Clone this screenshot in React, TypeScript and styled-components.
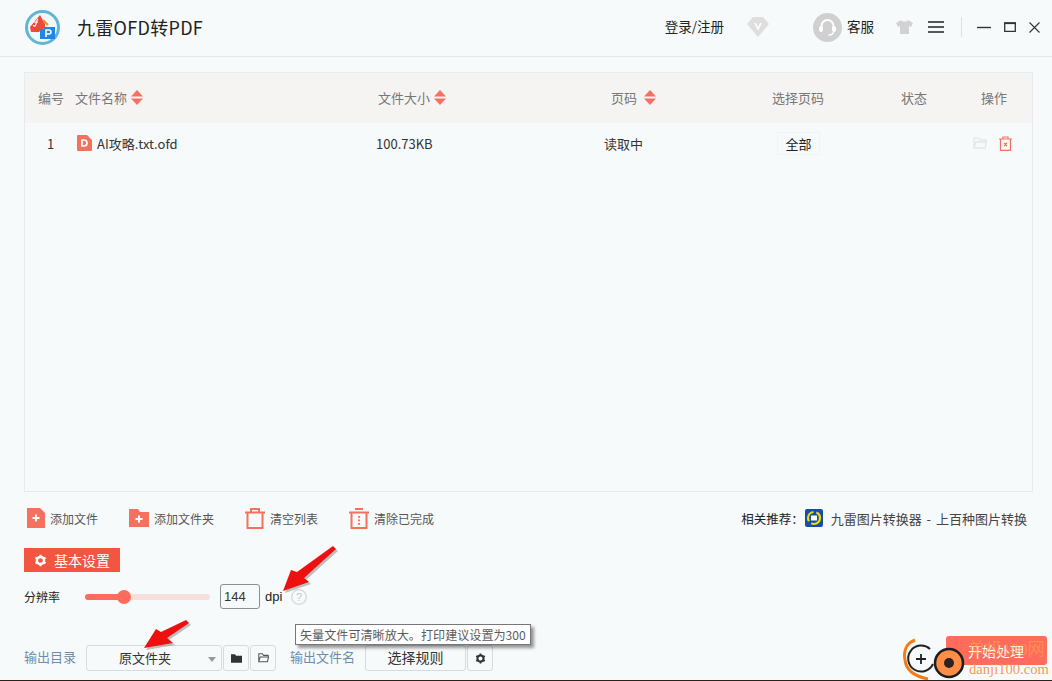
import React from 'react'
import styled, { createGlobalStyle } from 'styled-components'

const coral = '#ff6b5c'
const cjk = `"Noto Sans CJK SC", "Liberation Sans", sans-serif`

const GlobalStyle = createGlobalStyle`
  html, body {
    margin: 0;
    padding: 0;
    background: #f7fafb;
    font-family: ${cjk};
  }
  * { box-sizing: border-box; }
`

const Page = styled.div`
  position: relative;
  width: 1052px;
  height: 681px;
  overflow: hidden;
  display: flex;
  flex-direction: column;
  background: #f7fafb;
  border-bottom: 1px solid #2b2118;
`

const Header = styled.header`
  height: 57px;
  flex: none;
  display: flex;
  align-items: center;
  padding: 0 12px 2px 25px;
  border-bottom: 1px solid #e4e6e8;
`

const AppTitle = styled.h1`
  margin: 0 0 0 17px;
  font-size: 18px;
  font-weight: 400;
  color: #222;
  letter-spacing: 0.3px;
`

const HeaderRight = styled.div`
  margin-left: auto;
  display: flex;
  align-items: center;
`

const HeaderText = styled.span`
  font-size: 13.5px;
  color: #222;
  margin-bottom: 3px;
`

const Avatar = styled.div`
  width: 29px;
  height: 29px;
  border-radius: 50%;
  background: #d0d0d0;
  display: flex;
  align-items: center;
  justify-content: center;
  margin: 0 5px 0 44px;
`

const Divider = styled.div`
  width: 1px;
  height: 20px;
  background: #dfe2e4;
  margin: 0 15px 0 17px;
`

const TableBox = styled.section`
  flex: none;
  margin: 15px 0 0 24px;
  width: 1009px;
  height: 420px;
  border: 1px solid #e8eaeb;
`

const HeadRow = styled.div`
  height: 50px;
  display: grid;
  grid-template-columns: 50px 303px 233px 161px 129px 80px 1fr;
  align-items: center;
  padding-bottom: 2px;
  background: #f5f4f2;
  font-size: 13px;
  color: #777;
`

const HeadCell = styled.div<{ $pad?: number; $gap?: number }>`
  display: flex;
  align-items: center;
  gap: ${p => p.$gap ?? 4}px;
  padding-left: ${p => p.$pad ?? 0}px;
`

const BodyRow = styled.div`
  height: 42px;
  display: grid;
  grid-template-columns: 50px 301px 228px 173px 173px 1fr;
  align-items: center;
  padding-bottom: 2px;
  font-size: 13px;
  color: #333;
`

const IndexCell = styled.div`
  text-align: center;
  padding-left: 1px;
`

const NameCell = styled.div`
  display: flex;
  align-items: center;
  gap: 5px;
  padding-left: 2px;
`

const PageCellBox = styled.div`
  width: 43px;
  height: 23px;
  border: 1px solid #f1f3f4;
  display: flex;
  align-items: center;
  justify-content: center;
  color: #222;
`

const ActionCell = styled.div`
  display: flex;
  align-items: center;
  gap: 12px;
  padding-left: 23px;
`

const ToolRow = styled.div`
  flex: none;
  height: 54px;
  display: flex;
  align-items: center;
  padding: 0 25px 2px 27px;
  font-size: 12px;
  color: #555;
`

const ToolItem = styled.div<{ $width: number }>`
  width: ${p => p.$width}px;
  display: flex;
  align-items: center;
  gap: 5px;
`

const Recommend = styled.div`
  margin-left: auto;
  display: flex;
  align-items: center;
  color: #333;
  font-size: 13px;
`

const RecommendLabel = styled.span`
  color: #222;
  font-size: 12.5px;
  margin-right: 1px;
`

const RecommendLink = styled.span`
  margin-left: 8px;
  color: #444;
  word-spacing: 2px;
`

const SettingsTab = styled.div`
  flex: none;
  margin: 2px 0 0 24px;
  width: 96px;
  height: 24px;
  background: #f25540;
  color: #fff;
  font-size: 14px;
  display: flex;
  align-items: center;
  gap: 7px;
  padding-left: 10px;
`

const DpiRow = styled.div`
  flex: none;
  height: 25px;
  margin: 12px 0 0 24px;
  display: flex;
  align-items: center;
  font-size: 12px;
  color: #222;
`

const Slider = styled.div`
  position: relative;
  width: 125px;
  height: 6px;
  margin: 0 10px 0 25px;
  border-radius: 3px;
  background: #f8dfdc;
`

const SliderFill = styled.div`
  height: 100%;
  border-radius: 3px;
  background: ${coral};
`

const SliderThumb = styled.div`
  position: absolute;
  top: -4px;
  width: 14px;
  height: 14px;
  margin-left: -7px;
  border-radius: 50%;
  background: ${coral};
`

const DpiInput = styled.div`
  width: 40px;
  height: 25px;
  border: 1px solid #8a8f94;
  border-radius: 3px;
  display: flex;
  align-items: center;
  padding-left: 3px;
  font-family: "Liberation Sans", sans-serif;
  font-size: 13px;
  color: #333;
`

const DpiUnit = styled.span`
  margin: 0 9px 0 5px;
  font-family: "Liberation Sans", sans-serif;
  font-size: 13px;
  color: #222;
`

const OutputRow = styled.div`
  flex: none;
  height: 26px;
  margin: 36px 0 0 24px;
  display: flex;
  align-items: center;
  font-size: 13px;
`

const OutputLabel = styled.span<{ $gap: number }>`
  color: #6d8cab;
  margin-right: ${p => p.$gap}px;
  margin-bottom: 4px;
`

const SelectBox = styled.div`
  width: 136px;
  height: 26px;
  border: 1px solid #d8dbdd;
  border-radius: 3px;
  display: flex;
  align-items: center;
  padding-left: 32px;
  padding-bottom: 2px;
  color: #333;
  position: relative;
`

const Caret = styled.span`
  position: absolute;
  right: 5px;
  top: 11px;
  border: 4px solid transparent;
  border-top: 5px solid #999;
  border-bottom: 0;
`

const IconButton = styled.div<{ $right?: number }>`
  width: 26px;
  height: 26px;
  margin-left: 1px;
  margin-right: ${p => p.$right ?? 0}px;
  border: 1px solid #d8dbdd;
  border-radius: 3px;
  display: flex;
  align-items: center;
  justify-content: center;
`

const RuleButton = styled.div`
  width: 101px;
  height: 26px;
  border: 1px solid #d8dbdd;
  border-radius: 3px;
  display: flex;
  align-items: center;
  justify-content: center;
  padding-bottom: 2px;
  font-size: 14px;
  color: #333;
`

const StartButton = styled.div`
  position: absolute;
  left: 946px;
  top: 636px;
  width: 101px;
  height: 29px;
  border-radius: 3px;
  background: ${coral};
  color: #fff;
  font-size: 14px;
  display: flex;
  align-items: center;
  padding-left: 22px;
`

const Tooltip = styled.div`
  position: absolute;
  left: 295px;
  top: 624px;
  width: 236px;
  height: 21px;
  background: #fff;
  border: 1px solid #777;
  box-shadow: 3px 3px 3px rgba(0, 0, 0, 0.4);
  font-size: 12.1px;
  line-height: 19px;
  padding-left: 4px;
  color: #5b5b5b;
  white-space: nowrap;
`

const ArrowLayer = styled.svg<{ $x: number; $y: number }>`
  position: absolute;
  left: ${p => p.$x}px;
  top: ${p => p.$y}px;
`

const WatermarkLogo = styled.svg`
  position: absolute;
  left: 903px;
  top: 637px;
`

const WatermarkName = styled.div`
  position: absolute;
  left: 968px;
  top: 638px;
  font-size: 17px;
  line-height: 24px;
  color: rgba(255, 165, 70, 0.6);
  font-family: "Liberation Serif", "Noto Sans CJK SC", serif;
  white-space: nowrap;
`

const WatermarkUrl = styled.div`
  position: absolute;
  left: 969px;
  top: 661px;
  font-family: "Liberation Serif", serif;
  font-size: 14.6px;
  line-height: 17px;
  color: #f39a55;
  white-space: nowrap;
`

const SortIcon = () => (
  <svg width="12" height="15" viewBox="0 0 12 15">
    <path d="M6 0 12 6.500H0Z" fill="#f5705f" />
    <path d="M0 8.500H12L6 15Z" fill="#f5705f" />
  </svg>
)

const GearIcon: React.FC<{ size: number; color: string }> = ({ size, color }) => (
  <svg width={size} height={size} viewBox="0 0 16 16">
    <circle cx="8" cy="8" r="4.400" fill="none" stroke={color} strokeWidth="3" />
    <g stroke={color} strokeWidth="2.600">
      <path d="M8 .8v3M8 12.200v3M1.800 4.400l2.600 1.500M11.600 10.100l2.600 1.500M1.800 11.600l2.600-1.500M11.600 5.900l2.600-1.500" />
    </g>
  </svg>
)

const AppLogo = () => (
  <svg width="35" height="35" viewBox="0 0 35 35">
    <circle cx="17.500" cy="17.500" r="16" fill="#f2f7f8" stroke="#62b5d4" strokeWidth="3" />
    <path d="M5 17 15 5l5 9v3l-6 5H6Z" fill="#ee4a3c" />
    <path d="M13 9c-2 1-1 5-3 7-.6.6-1.500 0-1.500-1M9 12h4" stroke="#fff" strokeWidth="1.200" fill="none" />
    <path d="M18 10l5 5" stroke="#f08a24" strokeWidth="2" />
    <path d="M15 19h3l1-2h11v12H15Z" fill="#1f86e6" />
    <path d="M21 27v-7h3a2 2 0 0 1 0 4h-3" stroke="#fff" strokeWidth="1.500" fill="none" />
  </svg>
)

const DocIcon = () => (
  <svg width="15" height="16" viewBox="0 0 15 16">
    <path d="M1 0H10L15 5V15a1 1 0 0 1-1 1H1a1 1 0 0 1-1-1V1a1 1 0 0 1 1-1Z" fill="#f5705f" />
    <path d="M5 5h2a3 3 0 0 1 0 6H5Z" fill="none" stroke="#fff" strokeWidth="1.700" />
  </svg>
)

const AddFileIcon = () => (
  <svg width="18" height="20" viewBox="0 0 18 20">
    <path d="M0 0H13L18 5V20H0Z" fill="#f5705f" />
    <path d="M9 6.500v7M5.500 10h7" stroke="#fff" strokeWidth="2" />
  </svg>
)

const AddFolderIcon = () => (
  <svg width="20" height="18" viewBox="0 0 20 18">
    <path d="M0 0H9L11 3H20V18H0Z" fill="#f5705f" />
    <path d="M10 6.500v7M6.500 10h7" stroke="#fff" strokeWidth="2" />
  </svg>
)

const ClearIcon = () => (
  <svg width="20" height="21" viewBox="0 0 20 21" fill="none" stroke="#f5705f" strokeWidth="2">
    <path d="M0 4.500H20M6 4.500V1H14V4.500M2.500 4.500V20H17.500V4.500" />
  </svg>
)

const ClearDoneIcon = () => (
  <svg width="20" height="21" viewBox="0 0 20 21" fill="none" stroke="#f5705f" strokeWidth="2">
    <path d="M0 4.500H20M6 1H14M2.500 4.500V20H17.500V4.500M10 8v1.800M10 11.500v1.800M10 15v1.800" />
  </svg>
)

const FolderOutline: React.FC<{ color: string; width?: number }> = ({ color, width = 14 }) => (
  <svg width={width} height={width * 0.86} viewBox="0 0 14 12" fill="none" stroke={color} strokeWidth="1.300">
    <path d="M1 11V1H5.500L7 3H13V5M1 11H12L13.500 5H2.800L1 11Z" />
  </svg>
)

const TrashIcon = () => (
  <svg width="13" height="15" viewBox="0 0 13 15" fill="none" stroke="#f5705f" strokeWidth="1.200">
    <path d="M0 3H13M4 3V1H9V3M1.500 3V14.400H11.500V3M5 7l3 3M8 7l-3 3" />
  </svg>
)

const RedArrow: React.FC<{ x: number; y: number; w: number; h: number; d: string }> = ({ x, y, w, h, d }) => (
  <ArrowLayer $x={x} $y={y} width={w} height={h} viewBox={`0 0 ${w} ${h}`}>
    <path d={d} fill="#777" opacity="0.45" transform="translate(2 2)" />
    <path d={d} fill="#ee0f0f" />
  </ArrowLayer>
)

export default function App() {
  return (
    <Page>
      <GlobalStyle />
      <Header>
        <AppLogo />
        <AppTitle>九雷OFD转PDF</AppTitle>
        <HeaderRight>
          <HeaderText>登录/注册</HeaderText>
          <svg width="22" height="20" viewBox="0 0 22 20" style={{ marginLeft: 23 }}>
            <path d="M6 0H16L22 7 11 20 0 7Z" fill="#dedede" />
            <path d="M8 6l3 6 3-6" stroke="#fff" strokeWidth="1.600" fill="none" />
          </svg>
          <Avatar>
            <svg width="19" height="19" viewBox="0 0 19 19" fill="none" stroke="#fff" strokeWidth="2">
              <path d="M3.500 10V8a6 6 0 0 1 12 0v2" />
              <rect x="1.500" y="8.500" width="3" height="5" rx="1.500" fill="#fff" strokeWidth="1" />
              <rect x="14.500" y="8.500" width="3" height="5" rx="1.500" fill="#fff" strokeWidth="1" />
              <path d="M15.500 13.500c0 2.500-2.500 3.500-5 3.500" strokeWidth="1.400" />
            </svg>
          </Avatar>
          <HeaderText>客服</HeaderText>
          <svg width="17" height="14" viewBox="0 0 17 14" style={{ marginLeft: 22 }}>
            <path d="M5 0 0 3 2 7 4 6V14H13V6L15 7 17 3 12 0C11 2 6 2 5 0Z" fill="#d2d2d2" />
          </svg>
          <svg width="16" height="12" viewBox="0 0 16 12" style={{ marginLeft: 15 }} stroke="#222" strokeWidth="1.300">
            <path d="M0 1H16M0 6H16M0 11H16" />
          </svg>
          <Divider />
          <svg width="14" height="3" viewBox="0 0 14 3" stroke="#333" strokeWidth="1.400">
            <path d="M0 1.500H14" />
          </svg>
          <svg width="12" height="10" viewBox="0 0 12 10" style={{ marginLeft: 13 }} fill="none" stroke="#333">
            <path d="M.7 .8H11.300V9.300H.7Z" strokeWidth="1.300" />
            <path d="M0 1.300H12" strokeWidth="1.600" />
          </svg>
          <svg width="11" height="11" viewBox="0 0 11 11" style={{ marginLeft: 13 }} stroke="#333" strokeWidth="1.100">
            <path d="M.5 .5l10 10M10.500 .5l-10 10" />
          </svg>
        </HeaderRight>
      </Header>

      <TableBox>
        <HeadRow>
          <HeadCell $pad={13}>编号</HeadCell>
          <HeadCell>文件名称<SortIcon /></HeadCell>
          <HeadCell>文件大小<SortIcon /></HeadCell>
          <HeadCell $gap={7}>页码<SortIcon /></HeadCell>
          <HeadCell>选择页码</HeadCell>
          <HeadCell>状态</HeadCell>
          <HeadCell>操作</HeadCell>
        </HeadRow>
        <BodyRow>
          <IndexCell>1</IndexCell>
          <NameCell><DocIcon />AI攻略.txt.ofd</NameCell>
          <div>100.73KB</div>
          <div>读取中</div>
          <PageCellBox>全部</PageCellBox>
          <ActionCell>
            <FolderOutline color="#e4e7e8" />
            <TrashIcon />
          </ActionCell>
        </BodyRow>
      </TableBox>

      <ToolRow>
        <ToolItem $width={102}><AddFileIcon />添加文件</ToolItem>
        <ToolItem $width={116}><AddFolderIcon />添加文件夹</ToolItem>
        <ToolItem $width={104}><ClearIcon />清空列表</ToolItem>
        <ToolItem $width={100}><ClearDoneIcon />清除已完成</ToolItem>
        <Recommend>
          <RecommendLabel>相关推荐：</RecommendLabel>
          <svg width="18" height="18" viewBox="0 0 18 18">
            <rect width="18" height="18" rx="2" fill="#1450a8" />
            <circle cx="9" cy="9" r="6" fill="none" stroke="#f5d90a" strokeWidth="2.200" strokeDasharray="12 3" />
            <rect x="6" y="6.500" width="6" height="5" fill="#fff" />
          </svg>
          <RecommendLink>九雷图片转换器 - 上百种图片转换</RecommendLink>
        </Recommend>
      </ToolRow>

      <SettingsTab>
        <GearIcon size={13} color="#fff" />
        基本设置
      </SettingsTab>

      <DpiRow>
        分辨率
        <Slider>
          <SliderFill style={{ width: '31%' }} />
          <SliderThumb style={{ left: '31%' }} />
        </Slider>
        <DpiInput>144</DpiInput>
        <DpiUnit>dpi</DpiUnit>
        <svg width="16" height="16" viewBox="0 0 16 16">
          <circle cx="8" cy="8" r="7.300" fill="none" stroke="#d2d5d6" strokeWidth="1.200" />
          <text x="8" y="12" textAnchor="middle" fontSize="11" fill="#c6c9ca" fontFamily="Liberation Sans">?</text>
        </svg>
      </DpiRow>

      <OutputRow>
        <OutputLabel $gap={10}>输出目录</OutputLabel>
        <SelectBox>原文件夹<Caret /></SelectBox>
        <IconButton>
          <svg width="11" height="9" viewBox="0 0 14 11"><path d="M0 0H5L6.500 2H14V11H0Z" fill="#333" /></svg>
        </IconButton>
        <IconButton $right={14}><FolderOutline color="#555" width={11} /></IconButton>
        <OutputLabel $gap={10}>输出文件名</OutputLabel>
        <RuleButton>选择规则</RuleButton>
        <IconButton><GearIcon size={11} color="#333" /></IconButton>
      </OutputRow>

      <RedArrow
        x={275}
        y={540}
        w={66}
        h={56}
        d="M58 6 61 9 29 38 34 42 8 51 16 30 22 32Z"
      />
      <RedArrow
        x={140}
        y={617}
        w={54}
        h={36}
        d="M46 3 49 6 27 21 33 26 4 31 16 12 21 15Z"
      />

      <Tooltip>矢量文件可清晰放大。打印建议设置为300</Tooltip>

      <StartButton>开始处理</StartButton>
      <WatermarkName>单机100网</WatermarkName>
      <WatermarkLogo width="64" height="44" viewBox="0 0 64 44">
        <path d="M12 3C4 6 0 13 2 23c1 9 8 16 23 19" fill="none" stroke="#f57c14" strokeWidth="3" />
        <path d="M27 12A13 13 0 1 0 30 27" fill="#f7fafb" stroke="#222" strokeWidth="2" />
        <path d="M13 22H23M18 17V27" stroke="#222" strokeWidth="1.800" />
        <circle cx="46" cy="26" r="14" fill="#ff8d4a" stroke="#1d1d1d" strokeWidth="2.500" />
        <circle cx="46" cy="26" r="5" fill="#2a2320" />
      </WatermarkLogo>
      <WatermarkUrl>danji100.com</WatermarkUrl>
    </Page>
  )
}
